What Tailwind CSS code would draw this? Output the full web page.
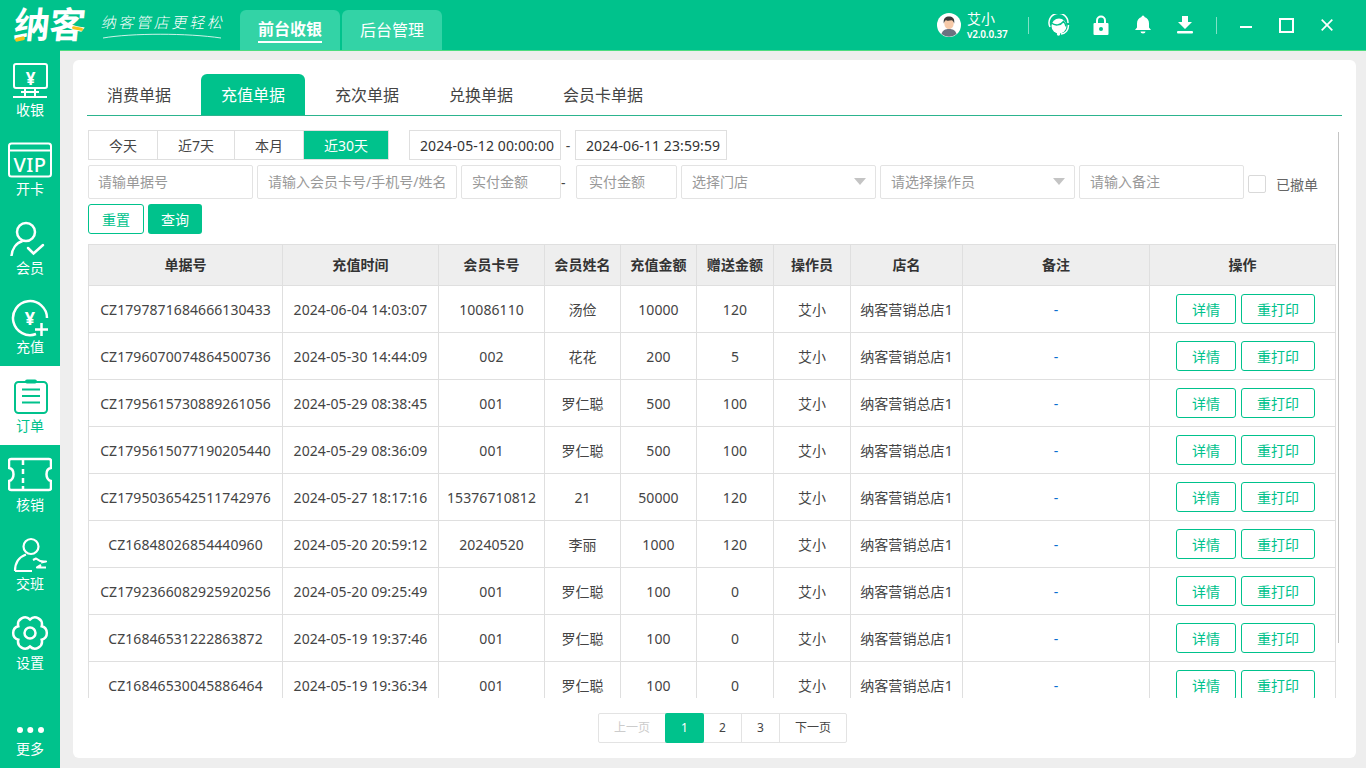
<!DOCTYPE html>
<html lang="zh">
<head>
    <meta charset="UTF-8">
    <title>纳客</title>
    <script src="https://cdn.jsdelivr.net/npm/@tailwindcss/browser@4"></script>
</head>
<body class="h-[768px] w-[1366px] overflow-hidden bg-[#eeeeee] font-['Noto_Sans','Noto_Sans_CJK_SC',sans-serif] text-[#444]">

    <!-- 顶部栏 -->
    <header class="flex h-[51px] items-end border-b border-[#4fdc80] bg-[#00c28c] text-white">
        <div class="relative flex h-[50px] w-[240px] shrink-0 items-center">
            <span class="ml-[14px] -skew-x-6 text-[36px] leading-none font-bold tracking-[-0.5px]">纳客</span>
            <span class="absolute left-[15px] top-[37px] h-[4px] w-[10px] -rotate-12 rounded-sm bg-[#f5c21b]"></span>
            <span class="absolute left-[72px] top-[27px] h-[3px] w-[11px] rotate-12 rounded-sm bg-[#f5c21b]"></span>
            <div class="ml-[17px] flex flex-col">
                <span class="translate-y-px -skew-x-12 text-[15px] leading-[20px] font-light tracking-[2.7px] whitespace-nowrap">纳客管店更轻松</span>
                <svg class="mt-[2px] h-[6px] w-[120px]" viewBox="0 0 120 6"><path d="M1 5C30 0 85 0 119 5" fill="none" stroke="#fff" stroke-width="1" opacity=".8"/></svg>
            </div>
        </div>
        <div class="flex h-[40px] w-[100px] items-center justify-center rounded-t-md bg-[#33d3a6]">
            <span class="border-b-2 border-white text-[16px] leading-[24px] font-semibold">前台收银</span>
        </div>
        <div class="ml-[2px] flex h-[40px] w-[100px] items-center justify-center rounded-t-md bg-[#33d3a6] text-[16px]">后台管理</div>

        <div class="ml-auto flex h-[50px] items-center">
            <svg class="h-[24px] w-[24px]" viewBox="0 0 24 24">
                <circle cx="12" cy="12" r="12" fill="#fff"/>
                <path d="M4.5 21c1-4 4-5 7.500-5s6.500 1 7.500 5a12 12 0 0 1-15 0z" fill="#6b7280"/>
                <ellipse cx="12" cy="10.500" rx="4.700" ry="5.500" fill="#f6c9a8"/>
                <path d="M6.800 10.500C6 5 9 3.500 12 3.500s6 1.500 5.200 7c-.6-2-1.500-3-2.700-3.300-2 .6-5 .6-5.800 0-.8.6-1.400 1.600-1.900 3.300z" fill="#3a3a3a"/>
            </svg>
            <div class="ml-[6px] flex w-[61px] flex-col">
                <span class="text-[14px] leading-[17px]">艾小</span>
                <span class="text-[10px] leading-[14px] font-semibold tracking-[-0.2px]">v2.0.0.37</span>
            </div>
            <span class="h-[17px] w-px bg-white/50"></span>
            <svg class="ml-[19px] h-[22px] w-[22px]" viewBox="0 0 22 22" fill="none" stroke="#fff">
                <path d="M2 13A9.500 9.500 0 1 1 20 9" stroke-width="1.500"/>
                <circle cx="11" cy="12" r="7.500" fill="#fff" stroke="none"/>
                <path d="M3.500 9c3.500 3 9 2.500 12-1.500 1.500 1.500 2.500 3 2.500 5" stroke="#00c28c" stroke-width="1.500"/>
                <path d="M20.500 11c0 5-3 8.500-7.500 9" stroke-width="1.500"/>
                <circle cx="10.500" cy="20" r="1.700" fill="#fff" stroke="none"/>
            </svg>
            <svg class="ml-[23px] h-[20px] w-[16px]" viewBox="0 0 16 20">
                <path d="M4 9V5.500a4 4 0 0 1 8 0V9" fill="none" stroke="#fff" stroke-width="2"/>
                <rect x="0.500" y="8" width="15" height="12" rx="1" fill="#fff"/>
                <circle cx="8" cy="14" r="2" fill="#00c28c"/>
            </svg>
            <svg class="ml-[26px] h-[20px] w-[16px]" viewBox="0 0 16 20" fill="#fff">
                <path d="M8 0.500a1.500 1.500 0 0 1 1.500 1.500C12.500 2.800 14 5.500 14 8.500v4l2 2.500H0l2-2.500v-4C2 5.500 3.500 2.800 6.500 2A1.500 1.500 0 0 1 8 .5z"/>
                <path d="M5.500 16.500h5a2.500 2 0 0 1-5 0z"/>
            </svg>
            <svg class="ml-[26px] h-[18px] w-[16px]" viewBox="0 0 16 18" fill="#fff">
                <path d="M5 0h6v6h4l-7 7-7-7h4z"/>
                <rect y="15" width="16" height="2.500" rx="1"/>
            </svg>
            <span class="ml-[23px] h-[17px] w-px bg-white/50"></span>
            <span class="ml-[23px] h-[2px] w-[12px] translate-y-[2px] bg-white"></span>
            <span class="ml-[27px] h-[15px] w-[15px] border-2 border-white"></span>
            <svg class="mr-[33px] ml-[27px] h-[12px] w-[12px]" viewBox="0 0 12 12"><path d="M0.700 0.700l10.600 10.600M11.300 0.700L0.700 11.300" stroke="#fff" stroke-width="1.700"/></svg>
        </div>
    </header>

    <div class="flex h-[717px]">
        <!-- 左侧菜单 -->
        <nav class="-mt-px flex h-[718px] w-[60px] shrink-0 flex-col bg-[#00c28c] text-[14px] text-white">
            <a class="flex h-[79px] flex-col items-center pt-[12px]">
                <svg class="h-[38px] w-[44px]" viewBox="0 0 44 38" fill="none" stroke="#fff" stroke-width="2">
                    <rect x="6" y="2" width="33" height="24" rx="2"/>
                    <path d="M17 26v8M27 26v8M13 30h18M5 35h34"/>
                    <text x="22.500" y="23" text-anchor="middle" font-size="17" font-weight="700" fill="#fff" stroke="none">¥</text>
                </svg>
                <span class="leading-[20px]">收银</span>
            </a>
            <a class="flex h-[79px] flex-col items-center pt-[12px]">
                <svg class="h-[38px] w-[44px]" viewBox="0 0 44 38" fill="none" stroke="#fff" stroke-width="2">
                    <rect x="1" y="2.500" width="42" height="33" rx="2.500"/>
                    <path d="M1 9.500h42"/>
                    <text x="22" y="31" text-anchor="middle" font-size="20" font-weight="500" letter-spacing="0.500" fill="#fff" stroke="none">VIP</text>
                </svg>
                <span class="leading-[20px]">开卡</span>
            </a>
            <a class="flex h-[79px] flex-col items-center pt-[12px]">
                <svg class="h-[38px] w-[44px]" viewBox="0 0 44 38" fill="none" stroke="#fff" stroke-width="2.500">
                    <circle cx="18" cy="12" r="9"/>
                    <path d="M3.500 36c.5-7 4.500-13 11-15"/>
                    <path d="M20 28l5.500 5.500L35 25" stroke-linecap="round"/>
                </svg>
                <span class="leading-[20px]">会员</span>
            </a>
            <a class="flex h-[79px] flex-col items-center pt-[12px]">
                <svg class="h-[38px] w-[44px]" viewBox="0 0 44 38" fill="none" stroke="#fff" stroke-width="2.500">
                    <path d="M28 35A17 17 0 1 1 39 19"/>
                    <path d="M33.500 24v13M27 30.500h13"/>
                    <text x="22" y="25.500" text-anchor="middle" font-size="18" font-weight="700" fill="#fff" stroke="none">¥</text>
                </svg>
                <span class="leading-[20px]">充值</span>
            </a>
            <a class="flex h-[79px] flex-col items-center bg-white pt-[12px] text-[#00c28c]">
                <svg class="h-[38px] w-[44px]" viewBox="0 0 44 38" fill="none" stroke="#00c28c" stroke-width="2">
                    <rect x="7" y="4" width="32" height="31" rx="3.500"/>
                    <rect x="17" y="1.500" width="12" height="4" rx="2" fill="#00c28c" stroke="none"/>
                    <path d="M14 11.500h18M14 18h18M14 24.500h18"/>
                </svg>
                <span class="leading-[20px]">订单</span>
            </a>
            <a class="flex h-[79px] flex-col items-center pt-[12px]">
                <svg class="h-[38px] w-[44px]" viewBox="0 0 44 38" fill="none" stroke="#fff" stroke-width="2.500">
                    <path d="M3 2h38a2 2 0 0 1 2 2v7c-6 1-6 11 0 13v7a2 2 0 0 1-2 2H3a2 2 0 0 1-2-2v-7c6-2 6-12 0-13V4a2 2 0 0 1 2-2z"/>
                    <path d="M15 2v6M15 12v5M15 21v5M15 29v4"/>
                </svg>
                <span class="leading-[20px]">核销</span>
            </a>
            <a class="flex h-[79px] flex-col items-center pt-[12px]">
                <svg class="h-[38px] w-[44px]" viewBox="0 0 44 38" fill="none" stroke="#fff" stroke-width="2.200">
                    <circle cx="23" cy="10.500" r="7.500"/>
                    <path d="M7 35c0-8 4-14 11-16.500M7 35h17"/>
                    <path d="M25 24l3-1.500c3 2.500 7 3.500 10 3l-5 1M38 31.500h-9l4-2.500" stroke-linejoin="round"/>
                </svg>
                <span class="leading-[20px]">交班</span>
            </a>
            <a class="flex h-[79px] flex-col items-center pt-[12px]">
                <svg class="h-[38px] w-[44px]" viewBox="0 0 44 38" fill="none" stroke="#fff" stroke-width="2.500">
                    <path d="M22 4.500A7 7 0 0 1 33.690 11.250A7 7 0 0 1 33.690 24.750A7 7 0 0 1 22 31.500A7 7 0 0 1 10.310 24.750A7 7 0 0 1 10.310 11.250A7 7 0 0 1 22 4.500z"/>
                    <circle cx="22" cy="18" r="5.500"/>
                </svg>
                <span class="leading-[20px]">设置</span>
            </a>
            <a class="mt-auto flex h-[79px] flex-col items-center pt-[12px]">
                <svg class="h-[38px] w-[44px]" viewBox="0 0 44 38" fill="#fff">
                    <circle cx="12" cy="29" r="3"/><circle cx="22.300" cy="29" r="3"/><circle cx="33" cy="29" r="3"/>
                </svg>
                <span class="leading-[20px]">更多</span>
            </a>
        </nav>

        <!-- 内容卡片 -->
        <main class="mt-[9px] ml-[13px] h-[698px] w-[1283px] rounded-md bg-white pt-[14px] pl-[14px]">
            <div class="mr-[14px] flex h-[42px] gap-[10px] border-b border-[#2cb48e] text-[16px]">
                <a class="flex h-[41px] w-[104px] items-center justify-center">消费单据</a>
                <a class="flex h-[41px] w-[104px] items-center justify-center rounded-t-md bg-[#00c28c] text-white">充值单据</a>
                <a class="flex h-[41px] w-[104px] items-center justify-center">充次单据</a>
                <a class="flex h-[41px] w-[104px] items-center justify-center">兑换单据</a>
                <a class="flex h-[41px] w-[120px] items-center justify-center">会员卡单据</a>
            </div>

            <div class="relative mt-[14px] ml-px h-[568px] w-[1251px]">
                <span class="absolute top-[2px] right-0 h-[511px] w-px bg-[#c4c4c4]"></span>

                <div class="flex h-[30px] items-center text-[14px]">
                    <div class="flex h-[30px] w-[301px] border border-[#dfdfdf]">
                        <span class="flex w-[69px] items-center justify-center border-r border-[#dfdfdf]">今天</span>
                        <span class="flex w-[77px] items-center justify-center border-r border-[#dfdfdf]">近7天</span>
                        <span class="flex w-[69px] items-center justify-center border-r border-[#dfdfdf]">本月</span>
                        <span class="flex flex-1 items-center justify-center bg-[#00c28c] text-white">近30天</span>
                    </div>
                    <span class="ml-[20px] flex h-[30px] w-[152px] items-center border border-[#dfdfdf] pl-[10px] tracking-[0.1px] text-[#333]">2024-05-12 00:00:00</span>
                    <span class="flex w-[14px] justify-center">-</span>
                    <span class="flex h-[30px] w-[152px] items-center border border-[#dfdfdf] pl-[10px] tracking-[0.1px] text-[#333]">2024-06-11 23:59:59</span>
                </div>

                <div class="mt-[5px] flex h-[34px] items-center gap-[4px] text-[14px]">
                    <input class="h-[34px] w-[165px] rounded-[2px] border border-[#e3e3e3] pr-[10px] pb-[2px] pl-[9px] placeholder:text-[#999]" placeholder="请输单据号">
                    <input class="h-[34px] w-[200px] rounded-[2px] border border-[#e3e3e3] pr-0 pb-[2px] pl-[10px] placeholder:text-[#999]" placeholder="请输入会员卡号/手机号/姓名">
                    <input class="h-[34px] w-[100px] rounded-[2px] border border-[#e3e3e3] px-[10px] pb-[2px] placeholder:text-[#999]" placeholder="实付金额">
                    <span class="-mx-[4px] flex w-[15px] justify-start text-[14px]">-</span>
                    <input class="h-[34px] w-[101px] rounded-[2px] border border-[#e3e3e3] pr-[10px] pb-[2px] pl-[12px] placeholder:text-[#999]" placeholder="实付金额">
                    <div class="flex h-[34px] w-[195px] items-center justify-between rounded-[2px] border border-[#e3e3e3] pr-[9px] pb-[2px] pl-[10px] text-[#999]">选择门店<span class="h-0 w-0 border-x-[6px] border-t-[7px] border-x-transparent border-t-[#c4c4c4]"></span></div>
                    <div class="flex h-[34px] w-[195px] items-center justify-between rounded-[2px] border border-[#e3e3e3] pr-[9px] pb-[2px] pl-[10px] text-[#999]">请选择操作员<span class="h-0 w-0 border-x-[6px] border-t-[7px] border-x-transparent border-t-[#c4c4c4]"></span></div>
                    <input class="h-[34px] w-[165px] rounded-[2px] border border-[#e3e3e3] px-[10px] pb-[2px] placeholder:text-[#999]" placeholder="请输入备注">
                    <span class="h-[18px] w-[18px] translate-y-[2px] rounded-[2px] border border-[#d9d9d9]"></span>
                    <span class="ml-[6px] translate-y-[2px] whitespace-nowrap text-[#666]">已撤单</span>
                </div>

                <div class="mt-[5px] flex h-[30px] gap-[4px] text-[14px]">
                    <button class="h-[30px] w-[56px] rounded-[3px] border border-[#00c28c] text-[#00c28c]">重置</button>
                    <button class="h-[30px] w-[54px] rounded-[3px] bg-[#00c28c] text-white">查询</button>
                </div>

                <div class="mt-[10px] h-[454px] w-[1249px] overflow-hidden">
                    <table class="w-[1247px] table-fixed border-collapse text-center text-[14px] tracking-[0.08px]">
                        <colgroup>
                            <col class="w-[194px]"><col class="w-[156px]"><col class="w-[106px]"><col class="w-[76px]"><col class="w-[76px]"><col class="w-[77px]"><col class="w-[77px]"><col class="w-[112px]"><col class="w-[187px]"><col class="w-[186px]">
                        </colgroup>
                        <thead>
                            <tr class="h-[41px] bg-[#eeeeee] text-[#333]">
                                <th class="border border-[#dfdfdf] pb-[2px] font-semibold">单据号</th>
                                <th class="border border-[#dfdfdf] pb-[2px] font-semibold">充值时间</th>
                                <th class="border border-[#dfdfdf] pb-[2px] font-semibold">会员卡号</th>
                                <th class="border border-[#dfdfdf] pb-[2px] font-semibold">会员姓名</th>
                                <th class="border border-[#dfdfdf] pb-[2px] font-semibold">充值金额</th>
                                <th class="border border-[#dfdfdf] pb-[2px] font-semibold">赠送金额</th>
                                <th class="border border-[#dfdfdf] pb-[2px] font-semibold">操作员</th>
                                <th class="border border-[#dfdfdf] pb-[2px] font-semibold">店名</th>
                                <th class="border border-[#dfdfdf] pb-[2px] font-semibold">备注</th>
                                <th class="border border-[#dfdfdf] pb-[2px] font-semibold">操作</th>
                            </tr>
                        </thead>
                        <tbody id="rows"></tbody>
                    </table>
                </div>
            </div>

            <!-- 分页 -->
            <div class="mt-[15px] ml-[511px] flex h-[30px] w-[249px] rounded-[2px] border border-[#e3e3e3] text-[12px]">
                <span class="flex w-[66px] items-center justify-center text-[#ccc]">上一页</span>
                <span class="-my-px flex w-[39px] items-center justify-center rounded-[2px] bg-[#00c28c] text-white">1</span>
                <span class="flex w-[38px] items-center justify-center border-r border-[#e3e3e3]">2</span>
                <span class="flex w-[38px] items-center justify-center border-r border-[#e3e3e3]">3</span>
                <span class="flex flex-1 items-center justify-center">下一页</span>
            </div>
        </main>
    </div>

    <script>
        const rows = [
            ['CZ1797871684666130433', '2024-06-04 14:03:07', '10086110', '汤俭', '10000', '120'],
            ['CZ1796070074864500736', '2024-05-30 14:44:09', '002', '花花', '200', '5'],
            ['CZ1795615730889261056', '2024-05-29 08:38:45', '001', '罗仁聪', '500', '100'],
            ['CZ1795615077190205440', '2024-05-29 08:36:09', '001', '罗仁聪', '500', '100'],
            ['CZ1795036542511742976', '2024-05-27 18:17:16', '15376710812', '21', '50000', '120'],
            ['CZ16848026854440960', '2024-05-20 20:59:12', '20240520', '李丽', '1000', '120'],
            ['CZ1792366082925920256', '2024-05-20 09:25:49', '001', '罗仁聪', '100', '0'],
            ['CZ16846531222863872', '2024-05-19 19:37:46', '001', '罗仁聪', '100', '0'],
            ['CZ16846530045886464', '2024-05-19 19:36:34', '001', '罗仁聪', '100', '0'],
        ];
        const td = 'border border-[#dfdfdf]';
        document.getElementById('rows').innerHTML = rows.map(r => `
            <tr class="h-[47px]">
                ${r.map(v => `<td class="${td}">${v}</td>`).join('')}
                <td class="${td}">艾小</td>
                <td class="${td} whitespace-nowrap">纳客营销总店1</td>
                <td class="${td} text-[#0b6fd0]">-</td>
                <td class="${td}">
                    <div class="flex gap-[5px] pl-[26px] text-[14px] text-[#00c28c]">
                        <button class="h-[30px] w-[60px] rounded-[3px] border border-[#00c28c]">详情</button>
                        <button class="h-[30px] w-[74px] rounded-[3px] border border-[#00c28c]">重打印</button>
                    </div>
                </td>
            </tr>`).join('');
    </script>

</body>
</html>
